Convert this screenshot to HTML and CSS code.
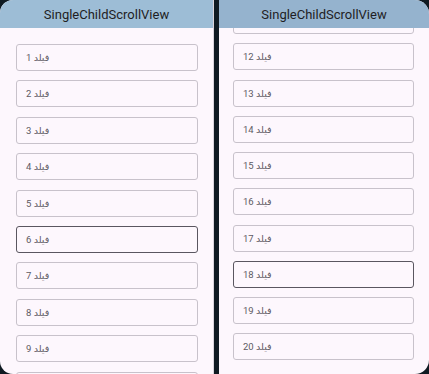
FILE: index.html
```html
<!DOCTYPE html>
<html lang="ar">
<head>
    <meta charset="UTF-8">
    <meta name="viewport" content="width=device-width, initial-scale=1.0">
    <title>SingleChildScrollView</title>
    <link rel="stylesheet" href="styles.css">
</head>
<body>
    <div class="frame">
        <div class="screen screen-left">
            <div class="app-bar">SingleChildScrollView</div>
            <div class="scroll-area">
                <div class="field-list">
                    <div class="field"><span>فيلد 1</span></div>
                    <div class="field"><span>فيلد 2</span></div>
                    <div class="field"><span>فيلد 3</span></div>
                    <div class="field"><span>فيلد 4</span></div>
                    <div class="field"><span>فيلد 5</span></div>
                    <div class="field active"><span>فيلد 6</span></div>
                    <div class="field"><span>فيلد 7</span></div>
                    <div class="field"><span>فيلد 8</span></div>
                    <div class="field"><span>فيلد 9</span></div>
                    <div class="field"></div>
                </div>
            </div>
        </div>
        <div class="divider"></div>
        <div class="screen screen-right">
            <div class="app-bar">SingleChildScrollView</div>
            <div class="scroll-area">
                <div class="field-list scrolled">
                    <div class="field"></div>
                    <div class="field"><span>فيلد 12</span></div>
                    <div class="field"><span>فيلد 13</span></div>
                    <div class="field"><span>فيلد 14</span></div>
                    <div class="field"><span>فيلد 15</span></div>
                    <div class="field"><span>فيلد 16</span></div>
                    <div class="field"><span>فيلد 17</span></div>
                    <div class="field active"><span>فيلد 18</span></div>
                    <div class="field"><span>فيلد 19</span></div>
                    <div class="field"><span>فيلد 20</span></div>
                </div>
            </div>
        </div>
    </div>
</body>
</html>
```

FILE: styles.css
```css
* { margin: 0; padding: 0; box-sizing: border-box; }
html, body {
    width: 429px;
    height: 374px;
    overflow: hidden;
}
body {
    font-family: Roboto, "DejaVu Sans", sans-serif;
    background: #0f1a22;
}
.frame {
    display: flex;
    height: 374px;
}
.screen {
    display: flex;
    flex-direction: column;
    background: #fdf7fd;
    overflow: hidden;
}
.screen-left {
    width: 214px;
    border-radius: 13px 0 0 13px;
    border-right: 1px solid #d9d4dc;
}
.screen-right {
    width: 210px;
    border-radius: 0 14px 14px 0;
}
.divider {
    width: 5px;
}
.app-bar {
    height: 28px;
    flex-shrink: 0;
    display: flex;
    align-items: center;
    justify-content: center;
    font-size: 13px;
    color: #1f1e24;
    position: relative;
    z-index: 1;
}
.screen-left .app-bar { background: #9dbdd6; }
.screen-right .app-bar { background: #95b3ce; }
.scroll-area {
    flex: 1;
    overflow: hidden;
}
.field-list {
    display: flex;
    flex-direction: column;
    gap: 9.4px;
    padding: 16px 15px 0 16px;
}
.field-list.scrolled {
    margin-top: -21px;
    gap: 9.25px;
    padding: 0 15px 0 14px;
}
.field {
    height: 27px;
    flex-shrink: 0;
    border: 1px solid #c8c2cb;
    border-radius: 3px;
    display: flex;
    align-items: center;
    padding-left: 9px;
    font-size: 9.5px;
    color: #5e5a63;
}
.field.active {
    border-color: #5a5660;
}
```
